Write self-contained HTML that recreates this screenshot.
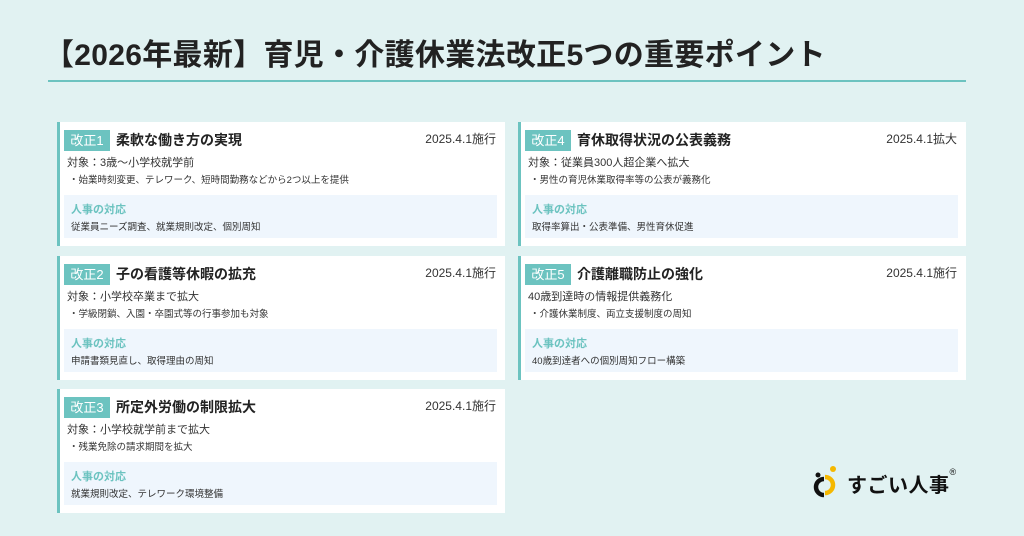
<!DOCTYPE html>
<html><head><meta charset="utf-8"><style>
*{margin:0;padding:0;box-sizing:border-box}
body{width:1024px;height:536px;background:#e1f2f2;font-family:"Liberation Sans","Noto Sans CJK JP",sans-serif;position:relative;overflow:hidden;color:#222}
h1{position:absolute;left:44px;top:30px;font-size:30px;font-weight:700;letter-spacing:0.3px;color:#222;white-space:nowrap}
.line{position:absolute;left:48px;top:80px;width:918px;height:2px;background:#6cc3c0}
.card{position:absolute;width:448px;height:124px;background:#fff;border-left:3px solid #6cc3c0}
.badge{position:absolute;left:4px;top:8px;width:46px;height:21px;background:#6cc3c0;color:#fff;font-size:13px;line-height:21px;text-align:center}
.t{position:absolute;left:56px;top:8px;font-size:14px;font-weight:700;line-height:21px}
.d{position:absolute;right:9px;top:8px;font-size:12px;line-height:18px;color:#333}
.tg{position:absolute;left:7px;top:32px;font-size:11px;color:#333}
.b{position:absolute;left:9px;top:50px;font-size:9.5px;color:#333}
.r{position:absolute;left:4px;top:73px;width:433px;height:43px;background:#eff6fd}
.rh{position:absolute;left:7px;top:6px;font-size:11px;color:#6cc3c0;font-weight:700}
.rt{position:absolute;left:7px;top:24px;font-size:9.5px;color:#333}
.logo{position:absolute;left:847px;top:469px;font-size:20px;font-weight:700;color:#111;letter-spacing:0.5px}
.logo sup{font-size:9px;font-weight:400;vertical-align:top;position:relative;top:-2px}
</style></head><body>
<h1>【2026年最新】育児・介護休業法改正5つの重要ポイント</h1>
<div class="line"></div>

<div class="card" style="left:57px;top:122px"><div class="badge">改正1</div><div class="t">柔軟な働き方の実現</div><div class="d">2025.4.1施行</div><div class="tg">対象：3歳〜小学校就学前</div><div class="b">・始業時刻変更、テレワーク、短時間勤務などから2つ以上を提供</div><div class="r"><div class="rh">人事の対応</div><div class="rt">従業員ニーズ調査、就業規則改定、個別周知</div></div></div>

<div class="card" style="left:57px;top:256px"><div class="badge">改正2</div><div class="t">子の看護等休暇の拡充</div><div class="d">2025.4.1施行</div><div class="tg">対象：小学校卒業まで拡大</div><div class="b">・学級閉鎖、入園・卒園式等の行事参加も対象</div><div class="r"><div class="rh">人事の対応</div><div class="rt">申請書類見直し、取得理由の周知</div></div></div>

<div class="card" style="left:57px;top:389px"><div class="badge">改正3</div><div class="t">所定外労働の制限拡大</div><div class="d">2025.4.1施行</div><div class="tg">対象：小学校就学前まで拡大</div><div class="b">・残業免除の請求期間を拡大</div><div class="r"><div class="rh">人事の対応</div><div class="rt">就業規則改定、テレワーク環境整備</div></div></div>

<div class="card" style="left:518px;top:122px"><div class="badge">改正4</div><div class="t">育休取得状況の公表義務</div><div class="d">2025.4.1拡大</div><div class="tg">対象：従業員300人超企業へ拡大</div><div class="b">・男性の育児休業取得率等の公表が義務化</div><div class="r"><div class="rh">人事の対応</div><div class="rt">取得率算出・公表準備、男性育休促進</div></div></div>

<div class="card" style="left:518px;top:256px"><div class="badge">改正5</div><div class="t">介護離職防止の強化</div><div class="d">2025.4.1施行</div><div class="tg">40歳到達時の情報提供義務化</div><div class="b">・介護休業制度、両立支援制度の周知</div><div class="r"><div class="rh">人事の対応</div><div class="rt">40歳到達者への個別周知フロー構築</div></div></div>

<svg style="position:absolute;left:812px;top:465px" width="32" height="34" viewBox="0 0 32 34">
<circle cx="21" cy="4" r="3" fill="#f5b800"/>
<circle cx="6" cy="10" r="2.5" fill="#111"/>
<path d="M12 30 A8 8 0 1 1 12 14" fill="none" stroke="#111" stroke-width="4.5"/>
<path d="M13 12 A8 8 0 1 1 13 28" fill="none" stroke="#f5b800" stroke-width="4.5"/>
</svg>
<div class="logo">すごい人事<sup>®</sup></div>
</body></html>
